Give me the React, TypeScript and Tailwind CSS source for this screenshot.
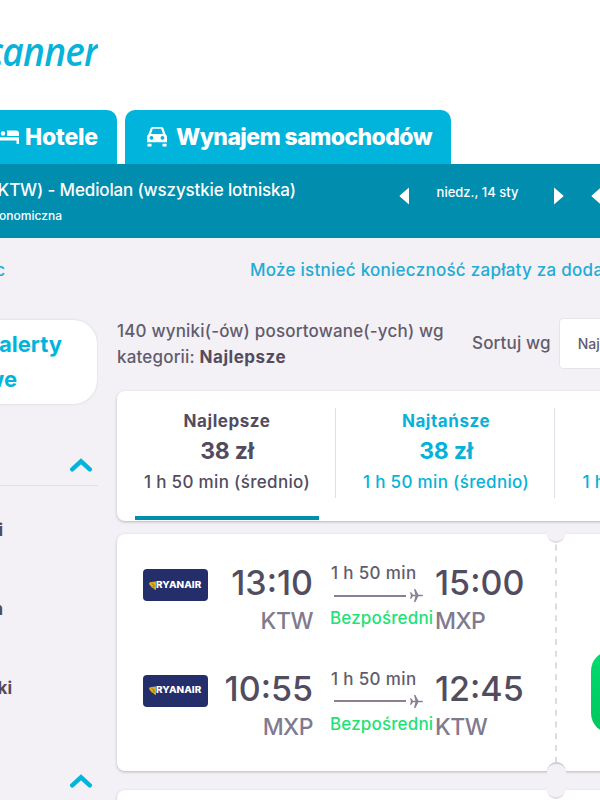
const inter = "font-['Inter','Liberation_Sans',sans-serif]";

function Bed() {
  return (
    <svg className="h-[14px] w-[24px] shrink-0" viewBox="0 0 24 14" fill="#fff">
      <path d="M0 0h2.500v7H24v7h-2.500v-3.500h-19V14H0z" />
      <circle cx="8" cy="3.500" r="2.200" />
      <path d="M12 .5h9q3 0 3 3v2.500H12z" />
      <path d="M2.500 6H24v1.200H2.500z" fill="#00b4dc" />
    </svg>
  );
}

function Car() {
  return (
    <svg className="h-[20px] w-[20px] shrink-0" viewBox="0 0 20 20">
      <path
        fill="#fff"
        fillRule="evenodd"
        d="M5.600 0h8.800q1.600 0 2.100 1.500L18.400 7Q20 8.300 20 10v5.200H0V10Q0 8.300 1.600 7L3.500 1.500Q4 0 5.600 0zM5.800 1.700L4 7h12l-1.800-5.300zM4.500 9a1.900 1.900 0 1 0 .01 0zM15.500 9a1.900 1.900 0 1 0 .01 0z"
      />
      <path fill="#fff" d="M.5 16.700h4v2.800h-4zM15.500 16.700h4v2.800h-4z" />
    </svg>
  );
}

function Chevron() {
  return (
    <svg className="h-[14px] w-[24px]" viewBox="0 0 24 14" fill="none">
      <path d="M3.200 11.300L12 3.300l8.800 8" stroke="#00b4dc" strokeWidth="4.400" strokeLinecap="round" />
    </svg>
  );
}

function Triangle({ right = false }: { right?: boolean }) {
  return (
    <svg className="h-[20px] w-[11px] shrink-0" viewBox="0 0 11 20">
      <path
        d={right ? "M1 1.500L10.200 9.500Q10.600 10 10.200 10.500L1 18.500z" : "M10 1.500L.8 9.500Q.4 10 .8 10.500L10 18.500z"}
        fill="#fff"
      />
    </svg>
  );
}

function Plane() {
  return (
    <svg className="h-[13px] w-[13px]" viewBox="0 0 13 13" fill="#8b7f96">
      <path d="M0 3.300h1.200L3 5.700h2.400L4 0h1.400l3 5.700H12q1 .2 1 .8t-1 .8H8.400l-3 5.700H4l1.400-5.700H3L1.200 9.700H0l.9-3.200z" />
    </svg>
  );
}

function Ryanair() {
  return (
    <div className="flex h-[32px] w-[65px] items-center rounded-[4px] bg-[#232e6b] pl-[6px]">
      <svg className="h-[9px] w-[7px] shrink-0" viewBox="0 0 7 9" fill="#dfac18">
        <path d="M0 2Q1 .8 7 .5V9Q4.500 8.700 4.200 7Q2.300 6.800 2 5.300Q.3 4.800 0 2z" />
        <path d="M3 2.500l2 2-.2 2" fill="none" stroke="#232e6b" strokeWidth=".5" />
      </svg>
      <span className="origin-left scale-x-[1.17] text-[8.5px] leading-none font-extrabold text-white">
        RYANAIR
      </span>
    </div>
  );
}

type Leg = { dep: string; from: string; arr: string; to: string };

function FlightLeg({ dep, from, arr, to }: Leg) {
  return (
    <div className="flex h-[72px] items-start">
      <div className="ml-[26px] pt-[4px]">
        <Ryanair />
      </div>
      <div className="flex w-[105px] shrink-0 flex-col items-end text-right">
        <span className="text-[34px] leading-[36px] font-[450] text-[#524c61]">{dep}</span>
        <span className="text-[23px] leading-[41px] font-[450] tracking-[-0.5px] text-[#817a8f]">{from}</span>
      </div>
      <div className="ml-[17px] w-[106px] shrink-0">
        <div className="-mt-[1px] h-[19px] pl-[1px] text-[17px] leading-[19px] font-[450] tracking-[0.35px] whitespace-nowrap text-[#625b6e]">1 h 50 min</div>
        <div className="flex h-[25px] items-center pl-[4px]">
          <div className="mr-[4px] h-[2px] w-[72px] bg-[#8b7f96]" />
          <Plane />
        </div>
        <div className="h-[20px] text-[17px] leading-[21px] font-[450] tracking-[0.15px] whitespace-nowrap text-[#20e277]">Bezpośredni</div>
      </div>
      <div className="-ml-[1px] flex flex-col">
        <span className="text-[34px] leading-[36px] font-[450] text-[#524c61]">{arr}</span>
        <span className="text-[23px] leading-[41px] font-[450] tracking-[-0.5px] text-[#817a8f]">{to}</span>
      </div>
    </div>
  );
}

function SortTab({ title, active = false }: { title: string; active?: boolean }) {
  return (
    <div className={"flex w-full flex-col items-center pl-[2px] whitespace-nowrap " + (active ? "text-[#524c61]" : "text-[#06b2d9]")}>
      <span className="text-[17px] leading-[26px] font-bold tracking-[0.55px]">{title}</span>
      <span className="text-[23px] leading-[34px] font-bold tracking-[-0.2px]">38 zł</span>
      <span className="mt-[1px] text-[17px] leading-[26px] font-[450] tracking-[0.33px]">1 h 50 min (średnio)</span>
    </div>
  );
}

function Notch({ bottom = false }: { bottom?: boolean }) {
  return bottom ? (
    <div className="absolute bottom-[-5px] left-[430px] h-[14px] w-[19px] rounded-t-full border-t-2 border-[#d0cdd4] bg-[#f3f1f5]" />
  ) : (
    <div className="absolute top-[-2px] left-[430px] h-[11px] w-[18px] rounded-b-full border-b-2 border-[#dfdce3] bg-[#f3f1f5]" />
  );
}

export default function App() {
  return (
    <div className={"flex h-[800px] w-[600px] flex-col overflow-hidden bg-[#f3f1f5] " + inter}>
      <header className="flex h-[164px] shrink-0 flex-col bg-white">
        <div className="flex h-[110px] w-[98px] justify-end overflow-hidden pt-[26px]">
          <span className="origin-right scale-x-[0.95] font-['Open_Sans','Noto_Sans',sans-serif] text-[39px] leading-[50px] font-semibold tracking-[-0.8px] text-[#08b3da] italic">
            scanner
          </span>
        </div>
        <nav className="flex h-[54px] gap-[8px]">
          <div className="flex w-[117px] items-center justify-end overflow-hidden rounded-tr-[10px] bg-[#00b4dc] pr-[19px]">
            <Bed />
            <span className="ml-[6px] text-[23px] leading-[30px] font-extrabold tracking-[-0.2px] text-white">Hotele</span>
          </div>
          <div className="flex w-[326px] items-center rounded-t-[10px] bg-[#00b4dc] pl-[22px] whitespace-nowrap">
            <Car />
            <span className="ml-[9px] text-[23px] leading-[30px] font-extrabold tracking-[-0.6px] text-white">Wynajem samochodów</span>
          </div>
        </nav>
      </header>

      <section className="flex h-[74px] shrink-0 overflow-hidden bg-[#008dae] text-white">
        <div className="flex w-[296px] shrink-0 flex-col items-start overflow-hidden pt-[14px] whitespace-nowrap">
          <div className="flex w-[296px] justify-end text-[17px] leading-[24px] font-medium tracking-[-0.15px]">
            Katowice (KTW) - Mediolan (wszystkie lotniska)
          </div>
          <div className="mt-[4px] flex w-[62px] justify-end text-[12px] leading-[20px] font-medium">1 dorosły | Ekonomiczna</div>
        </div>
        <div className="flex h-[64px] shrink-0 items-center pl-[103px]">
          <Triangle />
          <span className="mb-[8px] w-[135px] text-center text-[13px] leading-[20px] font-medium whitespace-nowrap">niedz., 14 sty</span>
          <span className="ml-[8px] flex">
            <Triangle right />
          </span>
          <span className="ml-[27px] flex">
            <Triangle />
          </span>
        </div>
      </section>

      <div className="flex h-[80px] shrink-0 pt-[20px] text-[17px] leading-[24px] font-[450] whitespace-nowrap text-[#22abd5]">
        <span className="flex w-[5px] shrink-0 justify-end overflow-hidden">więc</span>
        <span className="ml-[245px] tracking-[0.26px]">Może istnieć konieczność zapłaty za dodatkowy</span>
      </div>

      <div className="flex h-[482px] shrink-0">
        <aside className="flex w-[98px] shrink-0 flex-col overflow-hidden">
          <div className="mt-[2px] mr-[1px] h-[84px] shrink-0 rounded-r-[24px] bg-white pt-[7px] text-[22px] leading-[35px] font-bold whitespace-nowrap text-[#00b4dc] shadow-[0_0_2px_1px_#e4e1e9]">
            <div className="flex w-[62px] justify-end">Otrzymuj alerty</div>
            <div className="flex w-[17px] justify-end">cenowe</div>
          </div>
          <div className="flex h-[82px] shrink-0 items-end justify-end border-b border-[#e2dfe5] pr-[5px] pb-[13px]">
            <Chevron />
          </div>
          <div className="flex flex-col text-[17px] leading-[24px] font-bold whitespace-nowrap text-[#524c61]">
            <div className="mt-[32px] flex w-[3px] justify-end">Bezpośredni</div>
            <div className="mt-[55px] flex w-[3px] justify-end">1 przesiadka n</div>
            <div className="mt-[55px] flex w-[12px] justify-end">Przesiadki</div>
          </div>
          <div className="mt-[74px] flex justify-end pr-[5px]">
            <Chevron />
          </div>
        </aside>

        <main className="ml-[19px] w-[483px] shrink-0">
          <div className="flex h-[73px] font-[450] whitespace-nowrap text-[#625b6e]">
            <div className="w-[355px] shrink-0 text-[17px] leading-[26px] tracking-[0.18px]">
              140 wyniki(-ów) posortowane(-ych) wg
              <br />
              kategorii: <b className="tracking-[0.5px] text-[#524c61]">Najlepsze</b>
            </div>
            <div className="flex h-[52px] shrink-0 items-center text-[17px] tracking-[0.15px]">Sortuj wg</div>
            <div className="ml-[8px] flex h-[51px] w-[90px] shrink-0 items-center rounded-[4px] border border-[#e6e4e9] bg-white pl-[18px] text-[14px]">
              Najlepsze
            </div>
          </div>

          <div className="flex h-[130px] w-[520px] flex-col overflow-hidden rounded-[8px] bg-white pt-[17px] shadow-[0_1px_3px_#b9b5be]">
            <div className="flex h-[90px] shrink-0">
              <div className="w-[219px] shrink-0 border-r border-[#dfdde5]">
                <SortTab title="Najlepsze" active />
              </div>
              <div className="w-[219px] shrink-0 border-r border-[#dfdde5]">
                <SortTab title="Najtańsze" />
              </div>
              <div className="w-[219px] shrink-0">
                <SortTab title="Najszybsze" />
              </div>
            </div>
            <div className="mt-[18px] ml-[18px] h-[4px] w-[184px] bg-[#008dae]" />
          </div>

          <div className="relative mt-[13px] flex h-[237px] w-[520px] rounded-[8px] bg-white shadow-[0_1px_3px_#b9b5be]">
            <div className="flex w-[438px] shrink-0 flex-col gap-[33.5px] pt-[31px]">
              <FlightLeg dep="13:10" from="KTW" arr="15:00" to="MXP" />
              <FlightLeg dep="10:55" from="MXP" arr="12:45" to="KTW" />
            </div>
            <svg className="h-[237px] w-[2px] shrink-0" viewBox="0 0 2 237">
              <path d="M1 10.500V230" stroke="#dedbe3" strokeWidth="2" strokeDasharray="6 5.800" />
            </svg>
            <div className="ml-[34px] flex w-[60px] items-start pt-[117px]">
              <div className="h-[82px] w-[60px] shrink-0 rounded-[20px] bg-linear-to-b from-[#00dc6e] to-[#00c65d]" />
            </div>
            <Notch />
            <Notch bottom />
          </div>

          <div className="relative mt-[19px] h-[40px] w-[520px] rounded-[8px] bg-white shadow-[0_1px_3px_#b9b5be]">
            <Notch />
          </div>
        </main>
      </div>
    </div>
  );
}
